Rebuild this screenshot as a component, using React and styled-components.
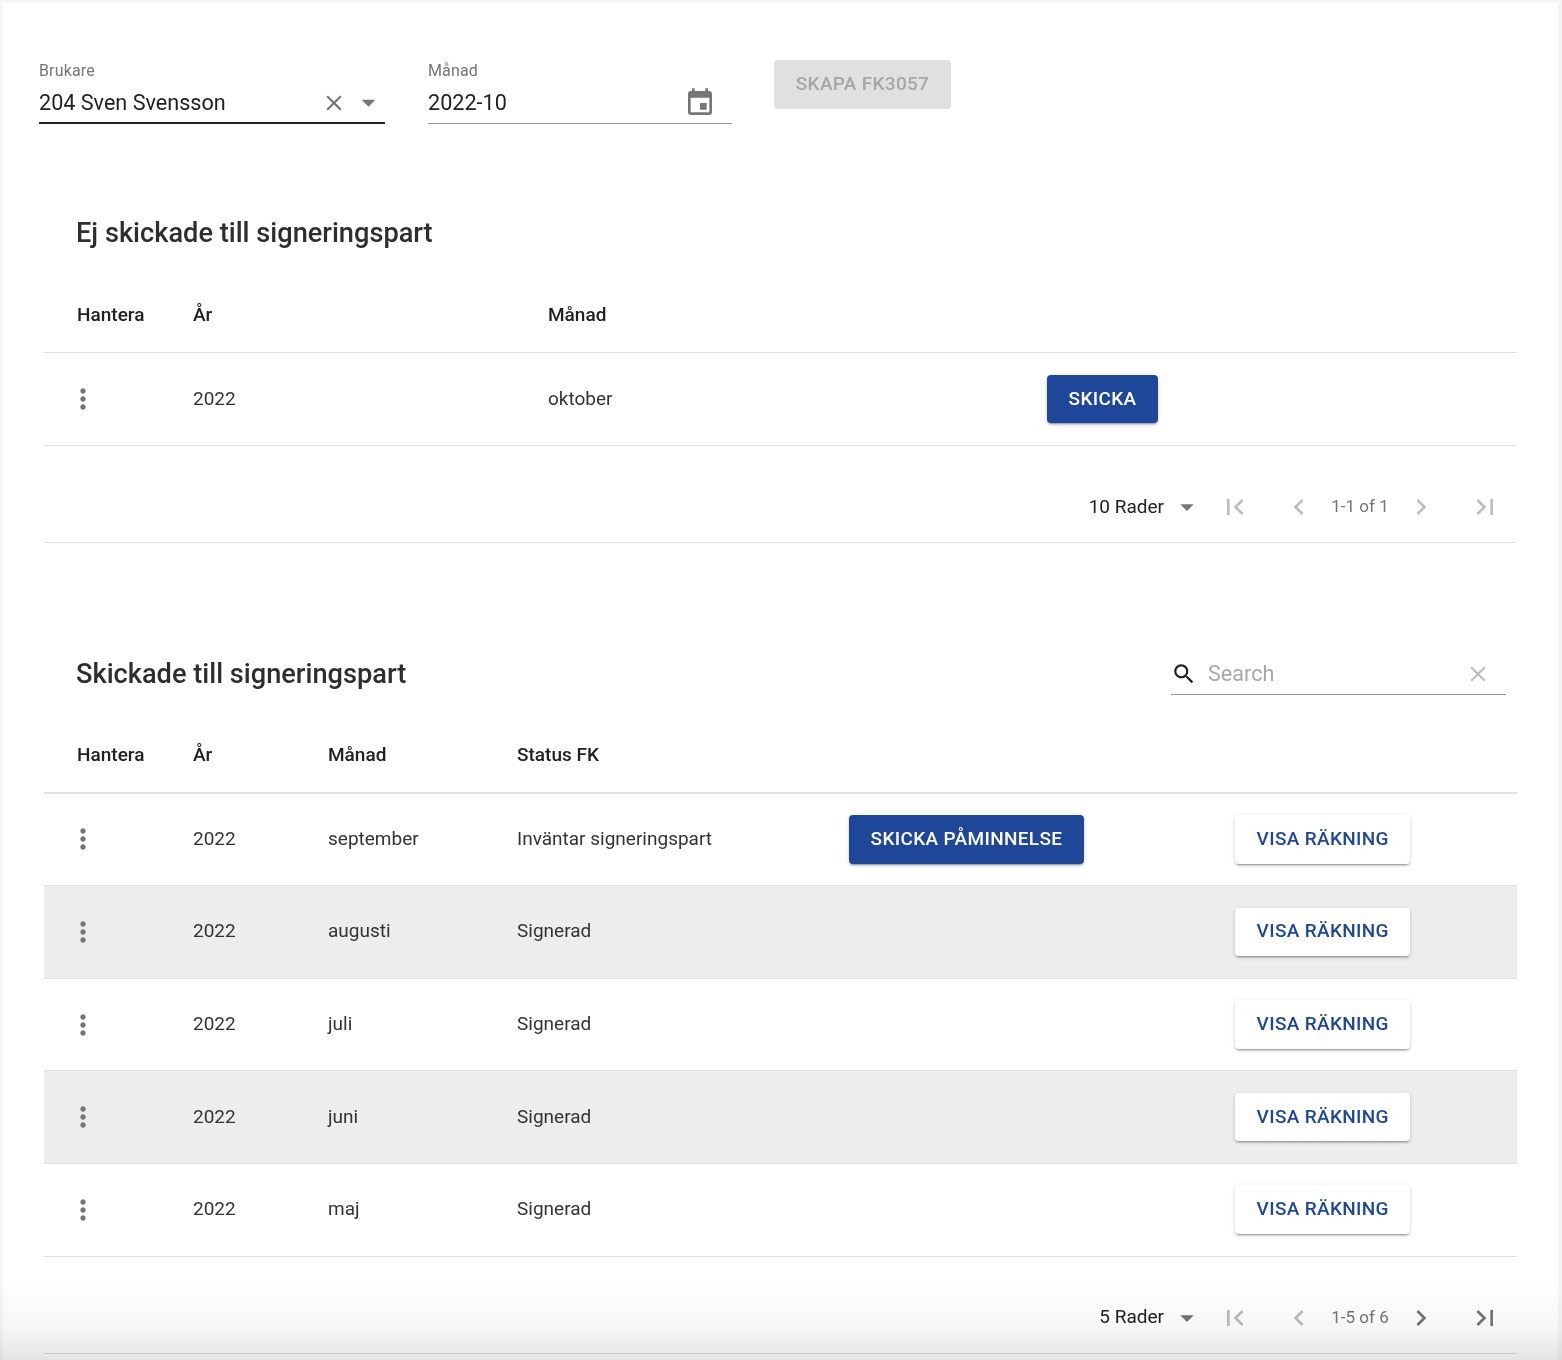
import React from "react";
import styled, { createGlobalStyle } from "styled-components";

const GlobalStyle = createGlobalStyle`
  html, body {
    margin: 0;
    padding: 0;
    background: #f5f5f5;
    font-family: Roboto, "Liberation Sans", sans-serif;
    color: #212121;
  }
`;

const BLUE = "#1e4799";

const Page = styled.div`
  position: relative;
  height: 1360px;
  overflow: hidden;
  padding: 3px 4px 0 3px;
  box-sizing: border-box;
`;

const Card = styled.main`
  background: #fff;
  height: 100%;
  padding: 57px 41px 0;
  box-sizing: border-box;
`;

const BottomFade = styled.div`
  position: absolute;
  left: 0;
  right: 0;
  bottom: 0;
  height: 80px;
  background: linear-gradient(to bottom, #fff 0%, #f6f6f6 60%, #e4e4e4 100%);
  mix-blend-mode: multiply;
  pointer-events: none;
`;

const FilterRow = styled.div`
  display: flex;
  align-items: flex-start;
  margin-left: -5px;
`;

const Field = styled.div`
  width: ${(p) => p.$width}px;
  margin-right: ${(p) => p.$gap}px;
  box-sizing: border-box;
`;

const FieldLabel = styled.div`
  padding-top: 1px;
  font-size: 16px;
  line-height: 20px;
  color: #757575;
  letter-spacing: 0.15px;
`;

const FieldInput = styled.div`
  display: flex;
  align-items: center;
  height: 43px;
  box-sizing: border-box;
  padding-top: 2px;
  border-bottom: ${(p) => (p.$active ? "2px solid #212121" : "1px solid #949494")};
  padding-bottom: ${(p) => (p.$active ? "0" : "1px")};
  font-size: 21.6px;
  color: #212121;
`;

const FieldValue = styled.span`
  flex: 1;
`;

const Icon = styled.svg`
  display: block;
  flex: none;
  width: ${(p) => p.$size || 26}px;
  height: ${(p) => p.$size || 26}px;
  fill: ${(p) => p.$color || "#757575"};
`;

const IconSlot = styled.span`
  display: flex;
  justify-content: center;
  margin-right: ${(p) => p.$right || 0}px;
`;

const CreateButton = styled.button`
  width: 177px;
  height: 49px;
  margin-top: 0;
  padding: 0 0 2px;
  border: 0;
  border-radius: 4px;
  background: #e0e0e0;
  color: #a6a6a6;
  font: 500 19px Roboto, sans-serif;
  letter-spacing: 0.3px;
  text-transform: uppercase;
`;

const Section = styled.section`
  margin-top: ${(p) => p.$top}px;
  margin-left: 0;
  width: 1473px;
`;

const SectionHead = styled.div`
  display: flex;
  align-items: center;
  justify-content: space-between;
  height: 40px;
  padding: 0 11px 0 32px;
`;

const SectionTitle = styled.h2`
  margin: 0;
  font-size: 27.2px;
  font-weight: 500;
  color: #2e2e2e;
`;

const SearchBox = styled.div`
  display: flex;
  align-items: center;
  width: 335px;
  height: 41px;
  box-sizing: border-box;
  border-bottom: 1px solid #949494;
  color: #a8a8a8;
  font-size: 21.6px;
`;

const SearchText = styled.span`
  flex: 1;
  margin-left: 11px;
`;

const Row = styled.div`
  display: grid;
  grid-template-columns: ${(p) => p.$columns};
  align-items: center;
  height: ${(p) => p.$height || 92.6}px;
  box-sizing: border-box;
  border-bottom: 1px solid #e0e0e0;
  background: ${(p) => (p.$shaded ? "#ededed" : "#fff")};
  font-size: 19px;
  color: #333;
`;

const HeadRow = styled(Row)`
  height: ${(p) => (p.$thick ? 77.6 : 78)}px;
  margin-top: ${(p) => p.$top}px;
  padding-top: ${(p) => (p.$thick ? 3 : 4)}px;
  border-bottom-width: ${(p) => (p.$thick ? 2 : 1)}px;
  font-weight: 500;
  color: #212121;
`;

const Cell = styled.div`
  padding-left: ${(p) => p.$pad || 0}px;
  padding-bottom: 2px;
`;

const ActionCell = styled.div``;

const Kebab = styled.span`
  display: block;
  padding-left: 23px;
`;

const BlueButton = styled.button`
  height: 48.6px;
  padding: 0 21.6px 2px;
  border: 0;
  border-radius: 4px;
  background: ${BLUE};
  color: #fff;
  font: 500 19px Roboto, sans-serif;
  letter-spacing: 0.33px;
  text-transform: uppercase;
  box-shadow: 0 3px 1px -2px rgba(0, 0, 0, 0.2), 0 2px 2px 0 rgba(0, 0, 0, 0.14), 0 1px 5px 0 rgba(0, 0, 0, 0.12);
`;

const WhiteButton = styled(BlueButton)`
  background: #fff;
  color: ${BLUE};
`;

const Pager = styled.div`
  display: flex;
  align-items: center;
  justify-content: flex-end;
  height: ${(p) => (p.$last ? 97.4 : 97)}px;
  box-sizing: border-box;
  padding-top: 26px;
  border-bottom: 1px solid #e0e0e0;
`;

const PerPage = styled.span`
  padding-bottom: 2px;
  font-size: 19px;
  color: #212121;
`;

const PerPageArrow = styled.span`
  display: block;
  margin-left: 7px;
`;

const PagerButton = styled.span`
  display: flex;
  justify-content: center;
  width: 64px;
`;

const PagerCount = styled.span`
  width: 58px;
  padding-bottom: 2px;
  font-size: 17px;
  color: #757575;
  text-align: center;
  white-space: nowrap;
`;

const paths = {
  clear: "M19 6.41 17.59 5 12 10.59 6.41 5 5 6.41 10.59 12 5 17.59 6.41 19 12 13.41 17.59 19 19 17.59 13.41 12z",
  drop: "M7 10l5 5 5-5z",
  calendar:
    "M17 12h-5v5h5v-5zM16 1v2H8V1H6v2H5c-1.11 0-1.99.9-1.99 2L3 19c0 1.1.89 2 2 2h14c1.1 0 2-.9 2-2V5c0-1.1-.9-2-2-2h-1V1h-2zm3 18H5V8h14v11z",
  more: "M12 8c1.1 0 2-.9 2-2s-.9-2-2-2-2 .9-2 2 .9 2 2 2zm0 2c-1.1 0-2 .9-2 2s.9 2 2 2 2-.9 2-2-.9-2-2-2zm0 6c-1.1 0-2 .9-2 2s.9 2 2 2 2-.9 2-2-.9-2-2-2z",
  search:
    "M15.5 14h-.79l-.28-.27C15.41 12.59 16 11.11 16 9.5 16 5.91 13.09 3 9.5 3S3 5.91 3 9.5 5.91 16 9.5 16c1.61 0 3.09-.59 4.23-1.57l.27.28v.79l5 4.99L20.49 19l-4.99-5zm-6 0C7.01 14 5 11.99 5 9.5S7.01 5 9.5 5 14 7.01 14 9.5 11.99 14 9.5 14z",
  first: "M18.41 16.59L13.82 12l4.59-4.59L17 6l-6 6 6 6zM6 6h2v12H6z",
  last: "M5.59 7.41L10.18 12l-4.59 4.59L7 18l6-6-6-6zM16 6h2v12h-2z",
  prev: "M15.41 7.41L14 6l-6 6 6 6 1.41-1.41L10.83 12z",
  next: "M10 6L8.59 7.41 13.17 12l-4.58 4.59L10 18l6-6z",
};

function Glyph({ name, size, color }) {
  return (
    <Icon viewBox="0 0 24 24" $size={size} $color={color}>
      <path d={paths[name]} />
    </Icon>
  );
}

const MoreButton = () => (
  <Kebab>
    <Glyph name="more" size={32} />
  </Kebab>
);

function TablePager({ perPage, count, canNext, last }) {
  const off = "#bdbdbd";
  const on = "#757575";
  return (
    <Pager $last={last}>
      <PerPage>{perPage}</PerPage>
      <PerPageArrow>
        <Glyph name="drop" size={32} />
      </PerPageArrow>
      <PagerButton>
        <Glyph name="first" size={32} color={off} />
      </PagerButton>
      <PagerButton>
        <Glyph name="prev" size={32} color={off} />
      </PagerButton>
      <PagerCount>{count}</PagerCount>
      <PagerButton>
        <Glyph name="next" size={32} color={canNext ? on : off} />
      </PagerButton>
      <PagerButton>
        <Glyph name="last" size={32} color={canNext ? on : off} />
      </PagerButton>
    </Pager>
  );
}

const firstColumns = "149px 355px 499px 1fr";
const secondColumns = "149px 135px 189px 332px 386px 1fr";

const sent = [
  { month: "september", status: "Inväntar signeringspart", remind: true },
  { month: "augusti", status: "Signerad" },
  { month: "juli", status: "Signerad" },
  { month: "juni", status: "Signerad" },
  { month: "maj", status: "Signerad" },
];

export default function App() {
  return (
    <Page>
      <GlobalStyle />
      <Card>
        <FilterRow>
          <Field $width={346} $gap={43}>
            <FieldLabel>Brukare</FieldLabel>
            <FieldInput $active>
              <FieldValue>204 Sven Svensson</FieldValue>
              <IconSlot $right={5}>
                <Glyph name="clear" color="#757575" />
              </IconSlot>
              <IconSlot>
                <Glyph name="drop" size={33} />
              </IconSlot>
            </FieldInput>
          </Field>
          <Field $width={304} $gap={42}>
            <FieldLabel>Månad</FieldLabel>
            <FieldInput>
              <FieldValue>2022-10</FieldValue>
              <IconSlot $right={16}>
                <Glyph name="calendar" size={32} />
              </IconSlot>
            </FieldInput>
          </Field>
          <CreateButton disabled>Skapa FK3057</CreateButton>
        </FilterRow>

        <Section $top={89}>
          <SectionHead>
            <SectionTitle>Ej skickade till signeringspart</SectionTitle>
          </SectionHead>
          <HeadRow $columns={firstColumns} $top={22}>
            <Cell $pad={33}>Hantera</Cell>
            <Cell>År</Cell>
            <Cell>Månad</Cell>
            <Cell />
          </HeadRow>
          <Row $columns={firstColumns} $height={93}>
            <MoreButton />
            <Cell>2022</Cell>
            <Cell>oktober</Cell>
            <ActionCell>
              <BlueButton>Skicka</BlueButton>
            </ActionCell>
          </Row>
          <TablePager perPage="10 Rader" count="1-1 of 1" />
        </Section>

        <Section $top={111}>
          <SectionHead>
            <SectionTitle>Skickade till signeringspart</SectionTitle>
            <SearchBox>
              <Glyph name="search" color="#212121" />
              <SearchText>Search</SearchText>
              <IconSlot $right={15}>
                <Glyph name="clear" color="#bdbdbd" />
              </IconSlot>
            </SearchBox>
          </SectionHead>
          <HeadRow $columns={secondColumns} $top={22} $thick>
            <Cell $pad={33}>Hantera</Cell>
            <Cell>År</Cell>
            <Cell>Månad</Cell>
            <Cell>Status FK</Cell>
            <Cell />
            <Cell />
          </HeadRow>
          {sent.map((row, i) => (
            <Row key={row.month} $columns={secondColumns} $shaded={i % 2 === 1}>
              <MoreButton />
              <Cell>2022</Cell>
              <Cell>{row.month}</Cell>
              <Cell>{row.status}</Cell>
              <ActionCell>{row.remind && <BlueButton>Skicka påminnelse</BlueButton>}</ActionCell>
              <ActionCell>
                <WhiteButton>Visa räkning</WhiteButton>
              </ActionCell>
            </Row>
          ))}
          <TablePager perPage="5 Rader" count="1-5 of 6" canNext last />
        </Section>
      </Card>
      <BottomFade />
    </Page>
  );
}
